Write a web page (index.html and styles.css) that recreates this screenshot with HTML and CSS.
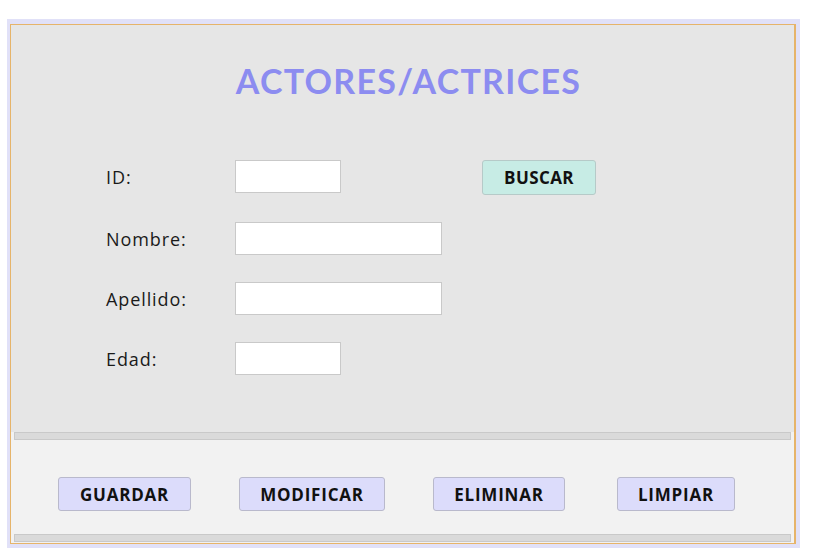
FILE: index.html
```html
<!DOCTYPE html>
<html lang="es">
<head>
<meta charset="utf-8">
<title>Actores/Actrices</title>
<link rel="stylesheet" href="styles.css">
</head>
<body>
<div class="page">
  <div class="frame">
    <div class="window">
      <section class="top">
        <h1 class="title">ACTORES/ACTRICES</h1>
        <div class="form">
          <label class="lbl">ID:</label>
          <div class="field"><span class="input short"></span></div>
          <div class="field"><button class="btn search">BUSCAR</button></div>
          <label class="lbl">Nombre:</label>
          <div class="field span2"><span class="input long"></span></div>
          <label class="lbl">Apellido:</label>
          <div class="field span2"><span class="input long"></span></div>
          <label class="lbl">Edad:</label>
          <div class="field span2"><span class="input short"></span></div>
        </div>
      </section>
      <div class="bar"></div>
      <section class="actions">
        <button class="btn action guardar">GUARDAR</button>
        <button class="btn action modificar">MODIFICAR</button>
        <button class="btn action eliminar">ELIMINAR</button>
        <button class="btn action limpiar">LIMPIAR</button>
      </section>
      <div class="bar"></div>
    </div>
  </div>
</div>
</body>
</html>
```

FILE: styles.css
```css
html, body {
  margin: 0;
  padding: 0;
  background: #ffffff;
}
.page {
  padding: 19px 0 0 7px;
}
.frame {
  width: 793px;
  height: 529px;
  box-sizing: border-box;
  background: #e1e1f8;
  padding: 5px 4px 4px 3px;
}
.window {
  height: 100%;
  box-sizing: border-box;
  border: 1px solid #e6b46a;
  border-right-width: 2px;
  display: flex;
  flex-direction: column;
  background: #f2f2f2;
}
.top {
  background: #e6e6e6;
  height: 407px;
  box-sizing: border-box;
  padding-top: 36px;
}
.title {
  margin: 0;
  text-align: center;
  font-family: "Lato", "Liberation Sans", sans-serif;
  font-weight: 700;
  font-size: 34px;
  line-height: 40px;
  letter-spacing: 1.3px;
  color: #8c8cf0;
  padding-left: 12px;
}
.form {
  margin-top: 59px;
  padding-left: 95px;
  display: grid;
  grid-template-columns: 129px 247px auto;
  grid-template-rows: 35px 33px 33px 33px;
  row-gap: 27px;
}
.lbl {
  font-family: "Open Sans", "Liberation Sans", sans-serif;
  font-size: 18px;
  letter-spacing: 0.9px;
  color: #1a1a1a;
  display: flex;
  align-items: center;
  height: 33px;
}
.field {
  display: flex;
  align-items: flex-start;
}
.span2 {
  grid-column: 2 / span 2;
}
.input {
  display: block;
  height: 33px;
  box-sizing: border-box;
  background: #ffffff;
  border: 1px solid #c9c9c9;
}
.short { width: 106px; }
.long { width: 207px; }
.btn {
  font-family: "Open Sans", "Liberation Sans", sans-serif;
  font-weight: 700;
  font-size: 17px;
  letter-spacing: 0.8px;
  color: #111111;
  border-radius: 3px;
  padding: 0;
  box-sizing: border-box;
  height: 34px;
}
.search {
  width: 114px;
  height: 35px;
  background: #c7ece5;
  border: 1px solid #b6cac8;
  letter-spacing: 0.4px;
}
.bar {
  height: 8px;
  margin: 0 3px;
  box-sizing: border-box;
  background: #dadada;
  border: 1px solid #c9c9c9;
}
.actions {
  height: 94px;
  box-sizing: border-box;
  display: flex;
  align-items: flex-start;
  padding: 37px 0 0 47px;
}
.action {
  background: #dcdcfb;
  border: 1px solid #b9b9cc;
}
.guardar { width: 133px; }
.modificar { width: 146px; margin-left: 48px; }
.eliminar { width: 132px; margin-left: 48px; }
.limpiar { width: 118px; margin-left: 52px; }
```
